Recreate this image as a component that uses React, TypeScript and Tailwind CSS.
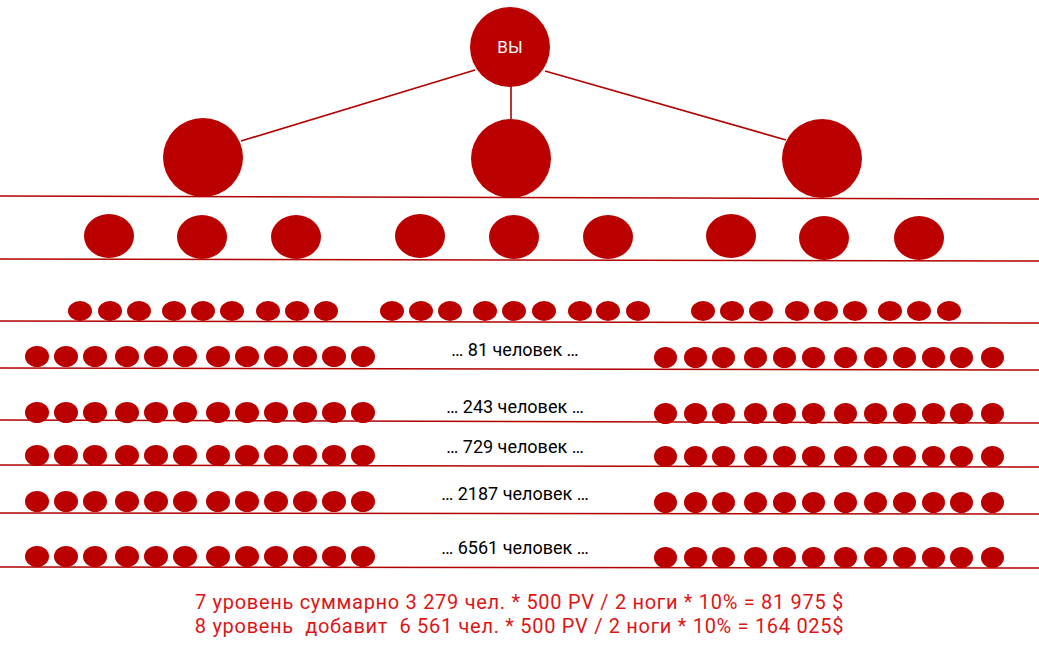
const RED = "bg-[#bb0000]"

// horizontal level lines: [y at left, y at right]
const levelLines: [number, number][] = [
  [196, 199],
  [259, 261],
  [321, 323],
  [368, 370],
  [420, 423],
  [465, 467],
  [513, 514],
  [567, 568],
]

const level2 = [
  { x: 109, y: 236 },
  { x: 202, y: 237 },
  { x: 296, y: 237 },
  { x: 420, y: 236 },
  { x: 514, y: 237 },
  { x: 608, y: 237 },
  { x: 731, y: 236 },
  { x: 824, y: 238 },
  { x: 919, y: 238 },
]

const level3 = [
  80, 110, 139, 174, 203, 232, 268, 297, 326, 392, 421, 450, 485, 514, 544, 580, 608, 638, 703, 732, 761,
  797, 826, 855, 890, 919, 949,
]

const leftCols = [37, 66, 95, 127, 156, 185, 218, 247, 276, 305, 334, 363]
const rightCols = [665, 695, 723, 755, 784, 813, 845, 875, 904, 933, 961, 992]

const rows = [
  { y: 356, label: "… 81 человек …", ly: 350 },
  { y: 412, label: "… 243 человек …", ly: 407 },
  { y: 455, label: "… 729 человек …", ly: 447 },
  { y: 501, label: "… 2187 человек …", ly: 494 },
  { y: 556, label: "… 6561 человек …", ly: 548 },
]

function Dot({ x, y, w, h }: { x: number; y: number; w: number; h: number }) {
  return (
    <div
      className={`absolute rounded-[50%] ${RED}`}
      style={{ left: x - w / 2, top: y - h / 2, width: w, height: h }}
    />
  )
}

export default function App() {
  return (
    <div className="w-[1039px] h-[658px] bg-white overflow-hidden font-['Roboto',sans-serif]">
      <div className="relative w-[1039px] h-[590px]">
        {/* connectors and level lines */}
        <svg className="absolute inset-0" width="1039" height="590">
          <line x1="475" y1="70" x2="241" y2="141" stroke="#b30000" strokeWidth="1.6" />
          <line x1="511" y1="86" x2="511" y2="120" stroke="#b30000" strokeWidth="1.6" />
          <line x1="545" y1="71" x2="786" y2="140" stroke="#b30000" strokeWidth="1.6" />
          {levelLines.map(([a, b], i) => (
            <line key={i} x1="0" y1={a} x2="1039" y2={b} stroke="#b30000" strokeWidth="1.6" />
          ))}
        </svg>

        {/* top node */}
        <div
          className={`absolute left-[470px] top-[7px] w-[80px] h-[80px] rounded-full ${RED} flex items-center justify-center`}
        >
          <span className="text-white text-[17px] pt-[1px]">ВЫ</span>
        </div>

        {/* level 1 */}
        <Dot x={203} y={157} w={80} h={79} />
        <Dot x={511} y={158} w={80} h={79} />
        <Dot x={822} y={158} w={80} h={79} />

        {/* level 2 */}
        {level2.map((p, i) => (
          <Dot key={i} x={p.x} y={p.y} w={50} h={44} />
        ))}

        {/* level 3 */}
        {level3.map((x, i) => (
          <Dot key={i} x={x} y={311} w={24} h={20} />
        ))}

        {/* levels 4-8 */}
        {rows.map((r, ri) => (
          <div key={ri}>
            {leftCols.map((x, i) => (
              <Dot key={"l" + i} x={x} y={r.y} w={24} h={21} />
            ))}
            {rightCols.map((x, i) => (
              <Dot key={"r" + i} x={x} y={r.y + 1} w={23} h={21} />
            ))}
            <div
              className="absolute left-[315px] w-[400px] text-center text-[18px] leading-[20px] text-black"
              style={{ top: r.ly - 10 }}
            >
              {r.label}
            </div>
          </div>
        ))}
      </div>

      <div className="text-center text-[#dd1515] text-[20px] leading-[24px] tracking-[0.7px] whitespace-pre">
        <p>7 уровень суммарно 3 279 чел. * 500 PV / 2 ноги * 10% = 81 975 $</p>
        <p>8 уровень  добавит  6 561 чел. * 500 PV / 2 ноги * 10% = 164 025$</p>
      </div>
    </div>
  )
}
